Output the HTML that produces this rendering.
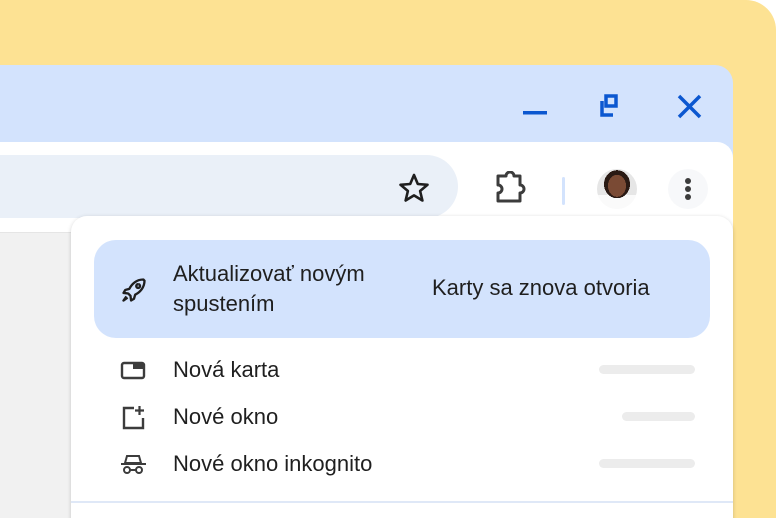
<!DOCTYPE html>
<html style="width:776px;height:518px;overflow:hidden"><head><style>
body{margin:0;width:776px;height:518px;overflow:hidden;position:relative;font-family:"Liberation Sans",Arial,sans-serif}
.bg{position:absolute;inset:0;background:#fde293;border-radius:0 30px 0 0}
.win{position:absolute;left:0;top:65px;width:733px;height:453px;background:#d3e3fd;border-radius:0 18px 0 0;overflow:hidden}
.tb{position:absolute;left:0;top:77px;width:733px;height:400px;background:#fff;border-radius:0 16px 0 0}
.omni{position:absolute;left:-40px;top:13px;width:498px;height:63px;background:#eaf0f8;border-radius:32px}
.menu{position:absolute;left:71px;top:216px;width:662px;height:320px;background:#fff;border-radius:16px;box-shadow:0 1px 4px rgba(0,0,0,.18)}
.hl{position:absolute;left:23px;top:24px;width:616px;height:98px;background:#d3e3fd;border-radius:22px}
.t{position:absolute;color:#1f1f1f;font-size:22px}
.bar{position:absolute;height:9px;background:#ececec;border-radius:5px}
</style></head><body>
<div class="bg"></div>
<div class="win">
 <svg style="position:absolute;left:520px;top:28px" width="190" height="30">
  <rect x="3" y="18" width="24" height="3.5" fill="#0b57d0"/>
  <path d="M82 8 V22 H93 M86 3 H96 V13 H86 Z" stroke="#0b57d0" stroke-width="3.5" fill="none"/>
  <path d="M159 3 L180 24 M180 3 L159 24" stroke="#0b57d0" stroke-width="3.5"/>
 </svg>
 <div class="tb">
  <div class="omni"></div>
  <svg style="position:absolute;left:398px;top:30px" width="34" height="32"><path d="M16 3 L19.8 12 L29.5 12.8 L22.1 19 L24.4 28.5 L16 23.4 L7.6 28.5 L9.9 19 L2.5 12.8 L12.2 12 Z" fill="none" stroke="#1f1f1f" stroke-width="2.6" stroke-linejoin="round"/></svg>
  <svg style="position:absolute;left:494px;top:29px" width="36" height="34"><path d="M4 5 H12 A4 4 0 0 1 20 5 H26 V14 A4 4 0 0 1 26 22 V30 H4 V22 A4 4 0 0 0 4 14 Z" fill="none" stroke="#3c3c3c" stroke-width="3" stroke-linejoin="round"/></svg>
  <div style="position:absolute;left:562px;top:35px;width:3px;height:28px;background:#d3e3fd;border-radius:2px"></div>
  <div style="position:absolute;left:597px;top:27px;width:40px;height:40px;border-radius:50%;background:radial-gradient(ellipse 9px 11px at 50% 42%,#7a4a34 0 100%,transparent 100%),radial-gradient(ellipse 13px 14px at 50% 38%,#2a1a14 0 100%,transparent 100%),linear-gradient(#e6e6e6 65%,#fafafa 65%)"></div>
  <div style="position:absolute;left:668px;top:27px;width:40px;height:40px;border-radius:50%;background:#f7f8fa"></div>
  <div style="position:absolute;left:685px;top:36px;width:6px;height:6px;border-radius:50%;background:#3c3c3c;box-shadow:0 8px 0 #3c3c3c,0 16px 0 #3c3c3c"></div>
 </div>
</div>
<div style="position:absolute;left:0;top:218px;width:733px;height:14px;background:#fff"></div>
<div style="position:absolute;left:0;top:232px;width:75px;height:300px;background:#f1f1f1;border-top:1px solid #e5e5e5"></div>
<div class="menu">
 <div class="hl"></div>
 <svg style="position:absolute;left:49px;top:60px" width="28" height="28" viewBox="0 0 24 24"><path d="M20 3 C14 3 10 7 8 11 L4.5 12 L3 14.5 L7 15 L9 17 L9.5 21 L12 19.5 L13 16 C17 14 21 10 21 4 Z M15.5 7 a1.6 1.6 0 1 0 0.1 0 M5.5 17.5 L3 21 L6.5 18.5" fill="none" stroke="#1f1f1f" stroke-width="2" stroke-linejoin="round"/></svg>
 <div class="t" style="left:102px;top:43px;line-height:30px">Aktualizovať novým<br>spustením</div>
 <div class="t" style="left:361px;top:59px">Karty sa znova otvoria</div>
 <svg style="position:absolute;left:49px;top:144px" width="28" height="22"><rect x="2" y="3" width="22" height="15" rx="2" fill="none" stroke="#3c3c3c" stroke-width="2.4"/><rect x="13" y="3" width="11" height="6" fill="#3c3c3c"/></svg>
 <div class="t" style="left:102px;top:141px">Nová karta</div>
 <div class="bar" style="left:528px;top:149px;width:96px"></div>
 <svg style="position:absolute;left:49px;top:188px" width="28" height="28"><path d="M14 4 H4 V24 H23 V14" fill="none" stroke="#3c3c3c" stroke-width="2.4"/><path d="M19.5 2 V11 M15 6.5 H24" stroke="#3c3c3c" stroke-width="2.2"/></svg>
 <div class="t" style="left:102px;top:188px">Nové okno</div>
 <div class="bar" style="left:551px;top:196px;width:73px"></div>
 <svg style="position:absolute;left:48px;top:236px" width="30" height="24"><path d="M8 4 H20 L22 11 H6 Z" fill="none" stroke="#3c3c3c" stroke-width="2"/><path d="M2 12 H27" stroke="#3c3c3c" stroke-width="2"/><circle cx="8" cy="18" r="3" fill="none" stroke="#3c3c3c" stroke-width="2"/><circle cx="20" cy="18" r="3" fill="none" stroke="#3c3c3c" stroke-width="2"/><path d="M11 18 H17" stroke="#3c3c3c" stroke-width="2"/></svg>
 <div class="t" style="left:102px;top:235px">Nové okno inkognito</div>
 <div class="bar" style="left:528px;top:243px;width:96px"></div>
 <div style="position:absolute;left:0;top:285px;width:662px;height:2px;background:#dfe8f7"></div>
</div>
</body></html>
